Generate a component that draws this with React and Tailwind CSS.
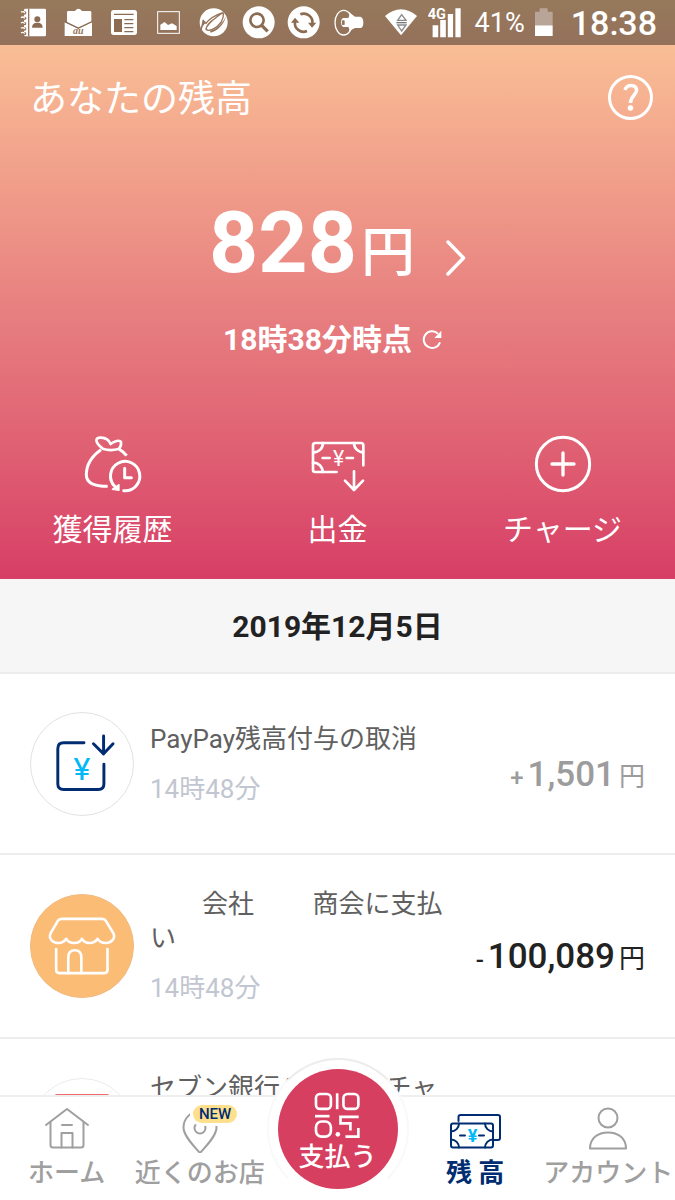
import React from "react";

function StatusIcons() {
  return (
    <svg viewBox="0 0 1110 135" className="h-[45px] w-[370px] shrink-0" fill="none" aria-hidden="true">
      {/* contacts book */}
      <rect x="72" y="26" width="66" height="83" rx="4" fill="#fff" />
      <path d="M86 26V109" stroke="#96775d" strokeWidth="4" />
      <circle cx="112" cy="58" r="9" fill="#8b6c53" />
      <path d="M96 83q0-15 16-15t16 15z" fill="#8b6c53" />
      {[37, 53, 69, 85, 99].map((y) => (
        <g key={y}>
          <circle cx="74" cy={y + 2} r="5" fill="#96775d" />
          <path d={`M63 ${y}q6-5 11 2`} stroke="#fff" strokeWidth="4" />
        </g>
      ))}
      {/* mail */}
      <path d="M225 33q10-14 21 0h24q4 0 4 4v30l-39 17-34-17V37q0-4 4-4z" fill="#fff" />
      <path d="M194 66l41 20 41-20v42h-82z" fill="#fff" />
      <path d="M194 65l41 19 41-19" stroke="#8b6c53" strokeWidth="4" />
      <text x="235" y="103" fontSize="30" fontStyle="italic" fontWeight="700" fill="#96775d" textAnchor="middle" fontFamily="Liberation Serif, serif">au</text>
      {/* news */}
      <rect x="333" y="30" width="78" height="75" rx="8" fill="#fff" />
      <path d="M342 43h59M373 59h27M373 71h27M373 83h27M373 95h27" stroke="#8b6c53" strokeWidth="4" />
      <rect x="342" y="57" width="24" height="39" fill="#8b6c53" />
      {/* picture */}
      <rect x="473" y="35" width="65" height="65" stroke="#fff" strokeWidth="3" />
      <path d="M481 90V74l13-8 10 9 12-5 14 8v12z" fill="#fff" />
      {/* globe swirl */}
      <circle cx="641" cy="67" r="42" fill="#fff" />
      <path d="M603 90L610 62L618 70C632 52 650 44 668 38C646 54 620 70 618 88C626 96 650 86 664 66Q672 52 670 38" stroke="#94745b" strokeWidth="4" />
      <path d="M606 84L608 60L618 68C610 74 608 80 606 84zM630 92C652 88 668 70 678 48C672 74 654 92 632 98z" fill="#94745b" />
      {/* search */}
      <circle cx="776" cy="67" r="48" fill="#fff" />
      <circle cx="771" cy="61" r="20" stroke="#8b6c53" strokeWidth="8" />
      <path d="M785 76l18 18" stroke="#8b6c53" strokeWidth="10" />
      {/* sync */}
      <circle cx="911" cy="67" r="48" fill="#fff" />
      <path d="M901 43a26 26 0 0 1 36 28M921 93a26 26 0 0 1-36-28" stroke="#8b6c53" strokeWidth="8" />
      <path d="M924 68h25l-13 15zM873 68h25l-13-15z" fill="#8b6c53" />
      {/* megaphone */}
      <ellipse cx="1031" cy="68" rx="26" ry="37" stroke="#fff" strokeWidth="4" />
      <path d="M1029 54h16q6-10 0-20q10 10 20 16h16q9 3 9 18t-9 16h-16q-10 4-20 14q6-10 0-17h-16q-6-4-6-14t6-13z" fill="#fff" />
      <rect x="1026" y="61" width="8" height="14" rx="2" fill="#94745b" />
    </svg>
  );
}

function StatusBar() {
  return (
    <div className="flex h-[45px] shrink-0 items-center justify-between bg-linear-to-b from-[#96795b] to-[#94715b] pr-[18px] text-white">
      <StatusIcons />
      <div className="flex items-center">
        <svg viewBox="150 0 96 135" className="h-[45px] w-8" fill="none" aria-hidden="true">
          <path d="M150 48q48-40 96 0l-48 58z" fill="#fff" />
          <path d="M188 61l12-17 13 17zM188 75l12 18 13-18z" stroke="#8a8a8a" strokeWidth="4" />
          <path d="M184 68h31" stroke="#777" strokeWidth="4" />
        </svg>
        <svg viewBox="280 0 100 135" className="ml-[11px] h-[45px] w-[33px]" aria-hidden="true">
          <path d="M294 76h17v36h-17zM317 60h17v52h-17zM340 42h16v70h-16zM363 24h16v88h-16z" fill="#fff" />
          <text x="279" y="56" fontSize="44" fontWeight="700" fill="#fff" fontFamily="Roboto, sans-serif">4G</text>
        </svg>
        <span className="ml-[14px] text-[27px] leading-9">41%</span>
        <svg viewBox="604 0 54 135" className="ml-[10px] h-[45px] w-[18px]" aria-hidden="true">
          <path d="M604 35h14v-10h24v10h15v41h-53z" fill="#b9a597" />
          <path d="M604 76h53v32h-53z" fill="#fff" />
        </svg>
        <span className="ml-[18px] text-[34px] leading-9 font-medium">18:38</span>
      </div>
    </div>
  );
}

const line = { fill: "none", strokeLinecap: "round", strokeLinejoin: "round" };

function BagIcon() {
  return (
    <svg viewBox="128 42 180 180" className="size-[60px]" stroke="#fff" strokeWidth="9" {...line} aria-hidden="true">
      <path d="M182 89C152 110 138 138 138 164C138 190 165 199 202 199M236 87Q250 96 259 107" strokeLinecap="butt" />
      <path d="M187 86Q210 94 234 87M187 86C164 68 162 52 182 53C200 54 207 62 211 72C222 63 238 59 242 66C243 78 238 84 234 87" strokeWidth="8" />
      <path d="M250 212A44 44 0 1 0 224 200" />
      <path d="M236 194v17l-20-3z" fill="#fff" strokeWidth="4" />
      <path d="M253 145V173H273" />
    </svg>
  );
}

function WithdrawIcon() {
  return (
    <svg viewBox="52 42 180 180" className="size-[60px]" stroke="#fff" strokeWidth="8" {...line} aria-hidden="true">
      <path d="M218 136V76q0-7-7-7H74q-7 0-7 7V150q0 6 7 6H138" />
      <path d="M97 69A28 28 0 0 1 69 97M190 69A28 28 0 0 0 218 97M67 128A28 28 0 0 1 96 156" />
      <path d="M96 114H117M168 114H187" />
      <text x="144" y="137" fontSize="64" fill="#fff" stroke="none" textAnchor="middle" fontFamily="Roboto, sans-serif">¥</text>
      <path d="M190 154V209M163 182L190 210L217 182" />
    </svg>
  );
}

function ChargeIcon() {
  return (
    <svg viewBox="727 42 180 180" className="size-[60px]" stroke="#fff" strokeWidth="9" {...line} aria-hidden="true">
      <circle cx="817" cy="132" r="80" />
      <path d="M817 99V165M784 132H850" strokeWidth="10" />
    </svg>
  );
}

function RefundIcon() {
  return (
    <svg viewBox="92 423 312 312" className="size-full" stroke="#002c71" strokeWidth="9" {...line} aria-hidden="true">
      <path d="M254 514H192q-18 0-18 18V640q0 17 18 17H298q17 0 17-17V580" />
      <path d="M314 493V545M283 517L314 548L343 517" />
      <text x="248" y="628" fontSize="98" fill="#00b9f8" stroke="none" textAnchor="middle" fontFamily="Roboto, sans-serif">¥</text>
    </svg>
  );
}

function ShopIcon() {
  return (
    <svg viewBox="92 101 312 312" className="size-full" stroke="#fff" strokeWidth="8" {...line} aria-hidden="true">
      <path d="M186 174H310q7 0 11 6L344 218C352 235 336 248 322 248C310 248 300 244 296 235C290 244 282 248 272 248C260 248 252 244 248 235C244 244 236 248 224 248C214 248 204 244 200 235C194 244 186 248 176 248C160 248 144 236 152 218L174 180q4-6 12-6z" />
      <path d="M169 266V330q0 10 10 10H316q10 0 10-10V266" />
      <path d="M206 340V292q0-22 20-22q20 0 20 22V340" />
    </svg>
  );
}

function BankIcon() {
  return (
    <svg viewBox="92 652 312 312" className="size-full" {...line} aria-hidden="true">
      <rect x="168" y="702" width="160" height="210" rx="4" stroke="#ee6a6c" strokeWidth="9" />
    </svg>
  );
}

function HomeIcon() {
  return (
    <svg viewBox="0 0 48 48" className="size-12" stroke="#9f9f9f" strokeWidth="2" {...line} aria-hidden="true">
      <path d="M3 20L24 4L45 20" />
      <path d="M7.500 17V40q0 2.500 2.500 2.500H38q2.500 0 2.500-2.500V17" />
      <path d="M18.500 42.500V28H29.500V42.500M19 20H29" />
    </svg>
  );
}

function PinIcon() {
  return (
    <svg viewBox="0 0 48 48" className="size-12" stroke="#9f9f9f" strokeWidth="2" {...line} aria-hidden="true">
      <path d="M24 48C18 41 7.500 31 7.500 22.500A16.500 16.500 0 0 1 40.500 22.500C40.500 31 30 41 24 48z" />
      <circle cx="24" cy="23" r="5.500" />
    </svg>
  );
}

function BillsIcon() {
  return (
    <svg viewBox="0 0 54 48" className="h-12 w-[54px]" stroke="#002c71" strokeWidth="2" {...line} aria-hidden="true">
      <path d="M10.500 16V12q0-2 2-2H50q2 0 2 2V33q0 2-2 2H46" />
      <rect x="3" y="18.500" width="42" height="24" rx="2" />
      <path d="M11 18.500A8 8 0 0 1 3 26.500M37 18.500A8 8 0 0 0 45 26.500M3 34.500A8 8 0 0 1 11 42.500M45 34.500A8 8 0 0 0 37 42.500" />
      <path d="M12 30.500H17M31 30.500H36" />
      <text x="24.500" y="37" fontSize="18" fill="#00b9f8" stroke="none" textAnchor="middle" fontFamily="Roboto, sans-serif">¥</text>
    </svg>
  );
}

function AccountIcon() {
  return (
    <svg viewBox="0 0 48 48" className="size-12" stroke="#9f9f9f" strokeWidth="2" {...line} aria-hidden="true">
      <circle cx="24" cy="13" r="9.500" />
      <path d="M6 43.500C6 33 14 27.500 24 27.500S42 33 42 43.500z" />
    </svg>
  );
}

function CodeIcon() {
  return (
    <svg viewBox="192 126 142 142" className="size-[47px]" stroke="#fff" strokeWidth="8" fill="none" aria-hidden="true">
      <rect x="198" y="132" width="45" height="45" rx="12" />
      <path d="M262 130V178" />
      <rect x="281" y="132" width="45" height="45" rx="12" />
      <path d="M195 199H239" />
      <rect x="198" y="215" width="45" height="46" rx="17" />
      <path d="M327 201H272V221H302V242M326 235V261H287" />
      <circle cx="264" cy="254" r="7" fill="#fff" stroke="none" />
    </svg>
  );
}

const actions = [
  { label: "獲得履歴", icon: <BagIcon /> },
  { label: "出金", icon: <WithdrawIcon /> },
  { label: "チャージ", icon: <ChargeIcon /> },
];

const history = [
  {
    title: "PayPay残高付与の取消",
    time: "14時48分",
    sign: "+",
    amount: "1,501",
    tone: "text-[#9c9c9c]",
    disc: "border-[#e2e2e2] bg-white",
    icon: <RefundIcon />,
  },
  {
    title: "\u3000\u3000会社\u3000\u3000 商会に支払い",
    time: "14時48分",
    sign: "-",
    amount: "100,089",
    tone: "text-[#222]",
    disc: "border-[#f0bb80] bg-[#fbbc76]",
    icon: <ShopIcon />,
  },
  {
    title: "セブン銀行ATMからチャージ",
    disc: "border-[#ececec] bg-white",
    icon: <BankIcon />,
  },
];

function HistoryRow({ item }) {
  return (
    <li className="flex min-h-[181px] items-center border-b-2 border-[#ededed] px-[30px] py-8">
      <span className={`block size-[104px] shrink-0 rounded-full border ${item.disc}`}>{item.icon}</span>
      <div className="ml-4 flex w-[300px] shrink-0 flex-col gap-4 text-[26px] leading-[34px]">
        <p className="text-[#606060]">{item.title}</p>
        <p className="min-h-[34px] text-[#c2c6d1]">{item.time}</p>
      </div>
      {item.amount && (
        <p className={`mt-6 flex flex-1 items-baseline justify-end whitespace-nowrap ${item.tone}`}>
          <span className="text-[24px] font-medium">{item.sign}</span>
          <span className="ml-1 text-[35px] leading-10 font-medium">{item.amount}</span>
          <span className="ml-1 text-[26px]">円</span>
        </p>
      )}
    </li>
  );
}

function NavItem({ label, icon, active, badge }) {
  return (
    <a
      href="#"
      aria-current={active ? "page" : undefined}
      className={`relative flex min-w-0 flex-1 flex-col items-center gap-[2px] pt-2 text-[26px] leading-9 whitespace-nowrap ${
        active ? "font-bold text-[#002c71]" : "font-medium text-[#9f9f9f]"
      }`}
    >
      {icon}
      {badge && (
        <span className="absolute top-2 left-1/2 ml-[-7px] rounded-full bg-[#fee08c] px-[6px] text-[15px] leading-[18px] text-[#002c71] ring-3 ring-white">
          {badge}
        </span>
      )}
      <span>{label}</span>
    </a>
  );
}

export default function App() {
  return (
    <div className="flex h-screen flex-col overflow-hidden bg-white font-['Roboto','Noto_Sans_CJK_JP',sans-serif]" lang="ja">
      <StatusBar />
      <main className="min-h-0 flex-1 overflow-hidden">
        <header className="bg-linear-to-b from-[#f9be95] via-[#e77f80] to-[#d73d66] pb-[31px] text-white">
          <div className="flex items-center justify-between pt-[30px] pr-[22px] pl-[30px]">
            <h1 className="pt-1 text-[37px] leading-[41px]">あなたの残高</h1>
            <button type="button" aria-label="ヘルプ" className="size-[45px]">
              <svg viewBox="0 0 45 45" className="size-full" stroke="#fff" {...line} aria-hidden="true">
                <circle cx="22.500" cy="22.500" r="21" strokeWidth="3" />
                <path d="M17 15Q18.500 10.500 23 10.500Q28.500 10.500 28.500 15.500C28.500 20 22.500 21 22.500 28" strokeWidth="3.500" strokeLinecap="butt" />
                <circle cx="22.500" cy="33" r="2.800" fill="#fff" stroke="none" />
              </svg>
            </button>
          </div>
          <a href="#" className="mt-20 flex items-center justify-center">
            <span className="text-[86px] leading-[86px] font-bold">
              828<span className="ml-1 text-[54px] leading-[54px] font-medium">円</span>
            </span>
            <svg viewBox="0 0 20 36" className="mt-[30px] ml-[31px] h-9 w-5" stroke="#fff" strokeWidth="3.500" {...line} aria-hidden="true">
              <path d="M2 2L17.500 18L2 34" />
            </svg>
          </a>
          <div className="mt-9 flex items-center justify-center gap-[10px] pr-[10px]">
            <p className="text-[30px] leading-9 font-bold">18時38分時点</p>
            <button type="button" aria-label="更新" className="size-5">
              <svg viewBox="694 416 60 60" className="size-full" stroke="#fff" strokeWidth="6" fill="none" aria-hidden="true">
                <path d="M742 427A25 25 0 1 0 748 453" />
                <path d="M752 418V440H731z" fill="#fff" stroke="none" />
              </svg>
            </button>
          </div>
          <div className="mt-[76px] grid grid-cols-3">
            {actions.map((a) => (
              <button key={a.label} type="button" className="flex flex-col items-center gap-[18px] text-[30px] leading-9">
                {a.icon}
                {a.label}
              </button>
            ))}
          </div>
        </header>
        <h2 className="flex min-h-[95px] items-center justify-center border-b-2 border-[#ededed] bg-[#f6f6f6] pt-[2px] text-[30px] leading-9 font-bold text-[#222]">
          2019年12月5日
        </h2>
        <ul>
          {history.map((item) => (
            <HistoryRow key={item.title} item={item} />
          ))}
        </ul>
      </main>
      <nav className="relative flex h-[105px] shrink-0 border-t-2 border-[#efefef] bg-white">
        <NavItem label="ホーム" icon={<HomeIcon />} />
        <NavItem label="近くのお店" icon={<PinIcon />} badge="NEW" />
        <div className="relative w-[142px] shrink-0">
          <button
            type="button"
            className="absolute bottom-0 left-1/2 size-[142px] -translate-x-1/2 rounded-full border-2 border-x-[#f9f9f9] border-t-[#ececec] border-b-transparent bg-white p-[9px]"
          >
            <span className="flex size-full flex-col items-center rounded-full bg-[#d73f61] pt-[23px] text-[26px] leading-9 font-medium text-white">
              <CodeIcon />
              <span>支払う</span>
            </span>
          </button>
        </div>
        <NavItem label="残 高" icon={<BillsIcon />} active />
        <NavItem label="アカウント" icon={<AccountIcon />} />
      </nav>
    </div>
  );
}
